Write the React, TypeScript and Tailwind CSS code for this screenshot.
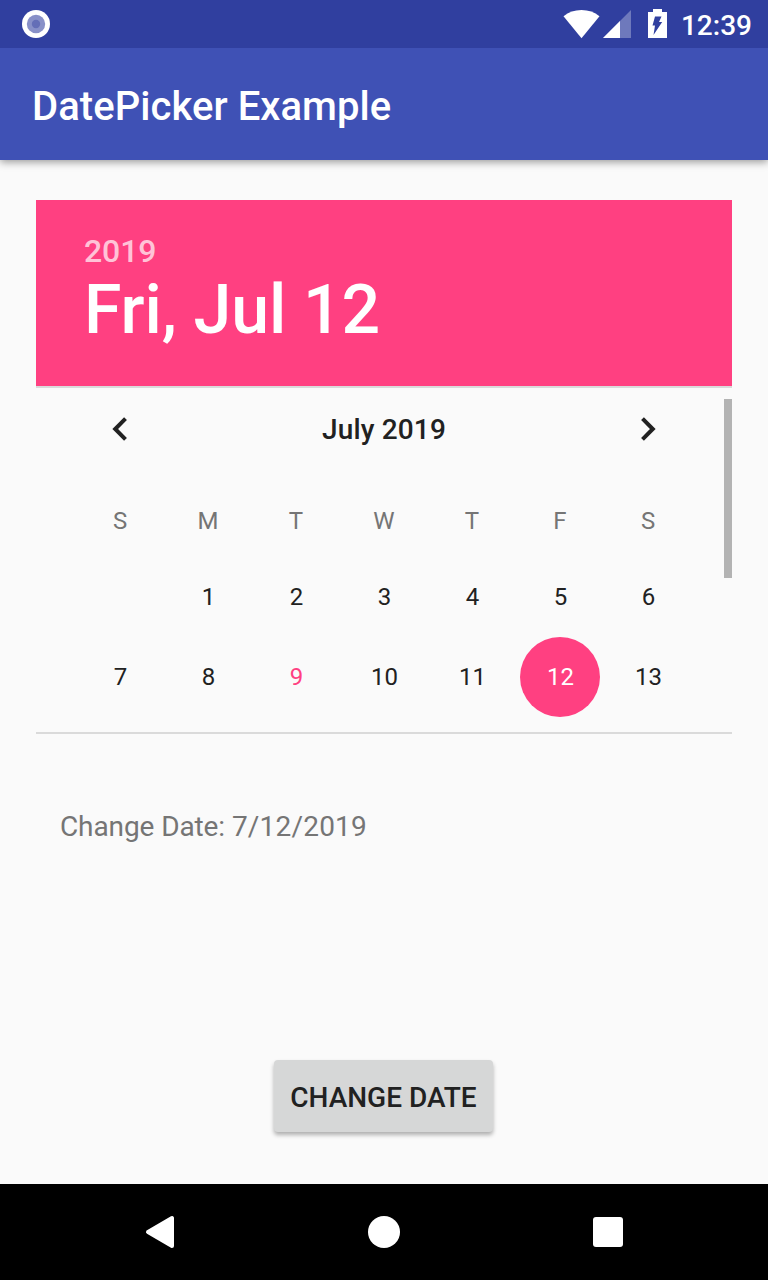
import React from "react";

const weekdays = ["S", "M", "T", "W", "T", "F", "S"];
const rows = [["", "1", "2", "3", "4", "5", "6"], ["7", "8", "9", "10", "11", "12", "13"]];

function dayClass(day: string) {
  if (day === "12") return "bg-[#ff4081] text-white";
  if (day === "9") return "text-[#ff4081]";
  return "text-[#212121]";
}

function StatusBar() {
  return (
    <div className="z-10 flex h-12 shrink-0 items-center justify-between bg-[#303f9f] pl-[22px] pr-4">
      <svg className="h-7 w-7" viewBox="0 0 28 28">
        <circle cx="14" cy="14" r="14" fill="#fff" />
        <circle cx="14" cy="14" r="9.2" fill="#8890c8" />
        <circle cx="14" cy="14" r="4.2" fill="#646eb7" />
      </svg>
      <div className="flex items-center">
        <svg className="h-12 w-[118px]" viewBox="563 0 118 48">
          <path d="M563.5 16.2Q571 10 581.500 10Q592 10 599.500 16.200L581.500 38.300Z" fill="#fff" />
          <path d="M631 10V38H603Z" fill="#fff" fillOpacity=".3" />
          <path d="M620 21V38H603Z" fill="#fff" />
          <path d="M653 9h9v3h5v26h-19V12h5z" fill="#fff" />
          <path d="M655 16.500h6.500l-2.500 5.500h3.200l-8.700 13 1.500-9.500h-2.500z" fill="#303f9f" />
        </svg>
        <span className="pt-[3px] text-[28px] font-medium leading-none text-white">12:39</span>
      </div>
    </div>
  );
}

function DatePicker() {
  return (
    <section className="mx-9 mt-10 h-[534px] border-b-2 border-[#dadada]">
      <header className="h-[186px] bg-[#ff4081] pl-12 pt-8">
        <div className="h-[38px] text-[32px] font-medium leading-[38px] tracking-[-0.1px] text-white/70">2019</div>
        <div className="text-[68px] font-medium leading-[80px] tracking-[-0.1px] text-white">Fri, Jul 12</div>
      </header>
      <div className="relative h-[346px] border-t-2 border-[#dadada] px-10">
        <div className="flex h-[82px] items-center justify-between px-8">
          <svg className="h-6 w-6" viewBox="0 0 24 24" fill="none" stroke="#212121" strokeWidth="4"><path d="M17.500 1.700L7.200 12l10.300 10.300" /></svg>
          <span className="pt-0.5 text-[28px] font-medium tracking-[0.15px] text-[#212121]">July 2019</span>
          <svg className="h-6 w-6" viewBox="0 0 24 24" fill="none" stroke="#212121" strokeWidth="4"><path d="M6.500 1.700l10.300 10.300L6.500 22.300" /></svg>
        </div>
        <div className="mt-[11px] grid grid-cols-7 text-center text-[24px] leading-[80px] text-[#757575]">
          {weekdays.map((d, i) => <span key={i}>{d}</span>)}
        </div>
        <div className="-mt-1 grid grid-cols-7 justify-items-center text-[24px]">
          {rows.flat().map((d, i) => (
            <span key={i} className={"h-20 w-20 rounded-full pl-px text-center leading-[80px] " + dayClass(d)}>{d}</span>
          ))}
        </div>
        <div className="absolute right-0 top-[11px] h-[179px] w-2 bg-[#b3b3b3]" />
      </div>
    </section>
  );
}

export default function App() {
  return (
    <main className="flex h-[1280px] w-[768px] flex-col overflow-hidden bg-[#fafafa] font-['Roboto',sans-serif]">
      <StatusBar />
      <h1 className="flex h-28 shrink-0 items-center bg-[#3f51b5] pl-8 pt-1.5 text-[40px] font-medium tracking-[0.06px] text-white shadow-[0_2px_8px_rgba(0,0,0,.4)]">DatePicker Example</h1>
      <DatePicker />
      <p className="ml-[60px] mt-[76px] text-[28px] leading-[33px] text-[#757575]"><span className="tracking-[-0.1px]">Change Date: </span><span className="tracking-[0.2px]">7/12/2019</span></p>
      <button className="mb-[52px] ml-[274px] mt-auto h-[72px] w-[219px] shrink-0 rounded-[4px] bg-[#d6d7d7] pt-[3px] text-[28px] font-medium text-[#212121] shadow-[0_3px_4px_rgba(0,0,0,.3)]">CHANGE DATE</button>
      <nav className="flex h-24 shrink-0 items-center justify-center gap-[192px] bg-black">
        <svg className="h-9 w-8" viewBox="0 0 32 36"><path d="M4 18L28 4v28z" fill="#fff" stroke="#fff" strokeWidth="4" strokeLinejoin="round" /></svg>
        <div className="h-8 w-8 rounded-full bg-white" />
        <div className="mx-px h-[30px] w-[30px] rounded-[3px] bg-white" />
      </nav>
    </main>
  );
}
